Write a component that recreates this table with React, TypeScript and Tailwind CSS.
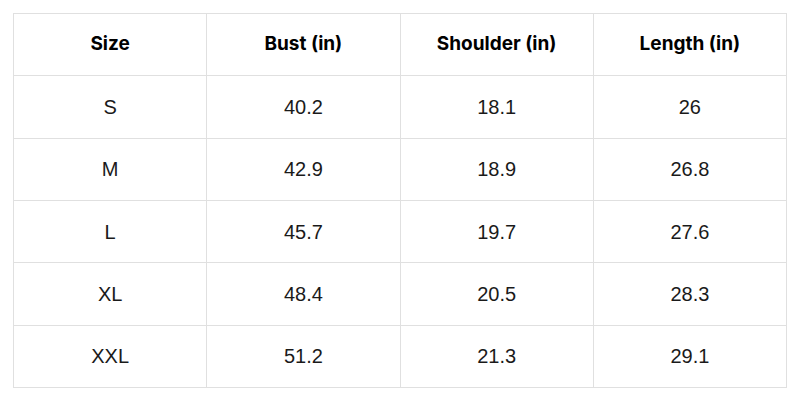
import React from 'react';

const headers = ['Size', 'Bust (in)', 'Shoulder (in)', 'Length (in)'];

const rows = [
  ['S', '40.2', '18.1', '26'],
  ['M', '42.9', '18.9', '26.8'],
  ['L', '45.7', '19.7', '27.6'],
  ['XL', '48.4', '20.5', '28.3'],
  ['XXL', '51.2', '21.3', '29.1'],
];

const App: React.FC = () => {
  return (
    <div className="w-[800px] h-[400px] bg-white p-[13px]">
      <div className="grid grid-cols-4 w-[774px] border-l border-t border-[#e0e0e0]">
        {/* Заголовок */}
        {headers.map((h) => (
          <div
            key={h}
            className="h-[62.33px] flex items-center justify-center border-r border-b border-[#e0e0e0] font-['Inter',sans-serif] font-bold text-[19px] text-black"
          >
            {h}
          </div>
        ))}

        {/* Строки */}
        {rows.map((row) =>
          row.map((cell, i) => (
            <div
              key={row[0] + i}
              className="h-[62.33px] flex items-center justify-center border-r border-b border-[#e0e0e0] font-['Liberation_Sans',Arial,sans-serif] text-[20px] text-[#1a1a1a]"
            >
              {cell}
            </div>
          ))
        )}
      </div>
    </div>
  );
};

export default App;
